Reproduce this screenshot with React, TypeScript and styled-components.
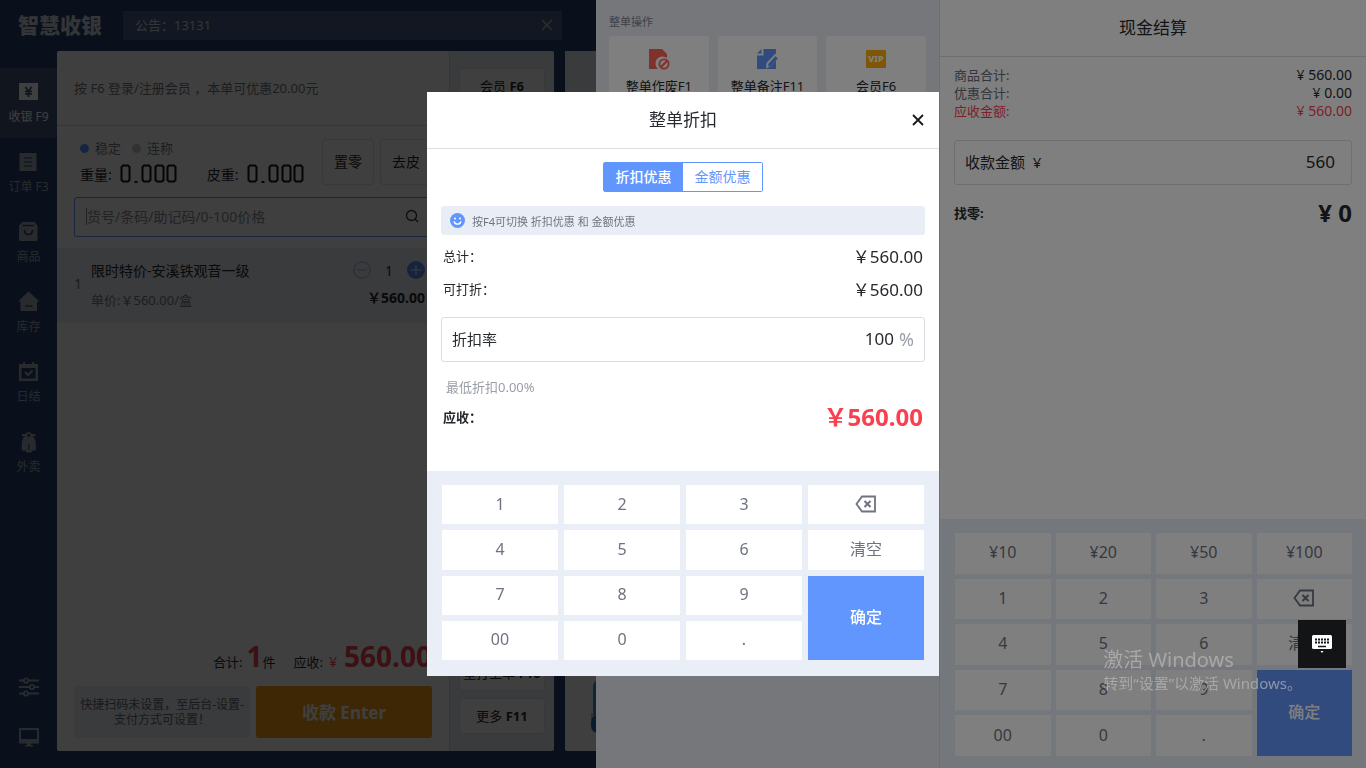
import React from 'react';
import styled, { createGlobalStyle } from 'styled-components';

const GlobalStyle = createGlobalStyle`
  * { box-sizing: border-box; }
  html, body, #root { height: 100%; }
  body { margin: 0; overflow: hidden; font-family: 'Noto Sans', 'Noto Sans CJK SC', sans-serif; font-size: 13px; color: #26292e; }
  button, input { font: inherit; color: inherit; margin: 0; padding: 0; }
  button { cursor: pointer; border: 0; background: none; }
  a { color: inherit; text-decoration: none; }
  p, h1, h2, dl, dd, dt { margin: 0; font-weight: 400; }
  b, strong { font-weight: 700; }
`;

/* ---------- point-of-sale page ---------- */

const Page = styled.div`
  height: 100%;
  min-height: 100vh;
  display: flex;
  flex-direction: column;
  background: #26406c;
`;
const TopBar = styled.header`
  height: 51px;
  flex: none;
  display: flex;
  align-items: center;
  padding-left: 18px;
`;
const Brand = styled.h1`
  width: 105px;
  padding-bottom: 2px;
  font-size: 21px;
  line-height: 24px;
  font-weight: 900;
  color: #cfd4de;
  white-space: nowrap;
`;
const Notice = styled.div`
  width: 439px;
  height: 29px;
  display: flex;
  align-items: center;
  justify-content: space-between;
  padding: 0 9px 2px 12px;
  background: #4f5d84;
  color: #d0d4dc;
  font-size: 13px;
`;
const NoticeClose = styled.button`
  display: flex;
  color: #b0b4be;
`;
const Main = styled.div`
  flex: 1;
  display: flex;
  min-height: 0;
`;
const Sidebar = styled.nav`
  width: 57px;
  flex: none;
  display: flex;
  flex-direction: column;
  justify-content: space-between;
  padding: 17px 0 6px;
`;
const NavGroup = styled.div`
  display: flex;
  flex-direction: column;
`;
const NavItem = styled.a<{ $active?: boolean }>`
  height: 70px;
  display: flex;
  flex-direction: column;
  align-items: center;
  justify-content: center;
  gap: 6px;
  padding-top: 2px;
  font-size: 12px;
  line-height: 18px;
  color: ${p => (p.$active ? '#ffffff' : '#a2a8b6')};
  background: ${p => (p.$active ? '#465478' : 'transparent')};
`;
const ToolLink = styled(NavItem)`
  height: 50px;
  padding-top: 0;
`;
const Order = styled.section`
  width: 393px;
  flex: none;
  display: flex;
  flex-direction: column;
  background: #fff;
  border-radius: 2px 0 0 2px;
  border-right: 1px solid #d4d8df;
`;
const Content = styled.div`
  flex: 1;
  display: flex;
  padding-bottom: 17px;
  min-width: 0;
`;
const MemberHint = styled.p`
  height: 75px;
  flex: none;
  padding: 0 17px;
  line-height: 74px;
  color: #73767e;
  border-bottom: 1px solid #d9dbe0;
  white-space: nowrap;
`;
const ScaleRow = styled.div`
  height: 71px;
  flex: none;
  display: flex;
  gap: 6px;
  padding: 13px 17px 0 23px;
`;
const Readings = styled.div`
  flex: none;
  width: 236px;
`;
const ScaleStates = styled.div`
  display: flex;
  gap: 11px;
  height: 18px;
  line-height: 18px;
  color: #777b84;
`;
const ScaleState = styled.span<{ $on?: boolean }>`
  display: flex;
  align-items: center;
  gap: 6px;
  &::before {
    content: '';
    width: 9px;
    height: 9px;
    border-radius: 50%;
    background: ${p => (p.$on ? '#6296ff' : '#c4c8c8')};
  }
`;
const Weights = styled.div`
  display: flex;
  gap: 29px;
  margin-top: 4px;
  height: 26px;
  font-size: 14px;
`;
const Weight = styled.div`
  display: flex;
  align-items: center;
  gap: 8px;
  white-space: nowrap;
`;
const Digits = styled.output`
  display: flex;
`;
const ScaleButton = styled.button`
  width: 52px;
  height: 46px;
  flex: none;
  padding-bottom: 2px;
  border: 1px solid #dfe1e4;
  border-radius: 3px;
  font-size: 14px;
`;
const SearchBox = styled.label`
  height: 40px;
  flex: none;
  margin: 0 17px 11px;
  display: flex;
  align-items: center;
  border: 1px solid #6296ff;
  border-radius: 3px;
  padding: 0 12px 2px 11px;
  input {
    flex: 1;
    min-width: 0;
    border: 0;
    border-left: 1px solid #8a8f96;
    outline: 0;
    height: 17px;
    background: none;
    font-size: 14px;
  }
  input::placeholder { color: #898d93; opacity: 1; }
`;
const Line = styled.article`
  height: 75px;
  flex: none;
  display: flex;
  align-items: center;
  gap: 9px;
  padding: 0 24px 0 17px;
  background: #e8ecf5;
`;
const LineNo = styled.span`
  width: 8px;
  padding-bottom: 4px;
  font-size: 14px;
  color: #6e7178;
`;
const LineBody = styled.div`
  flex: 1;
  height: 58px;
`;
const LineRow = styled.div`
  display: flex;
  align-items: center;
  justify-content: space-between;
  height: 27px;
  font-size: 14px;
  white-space: nowrap;
`;
const Muted = styled.span`
  font-size: 13px;
  color: #777b84;
  padding-top: 4px;
`;
const Stepper = styled.div`
  display: flex;
  align-items: center;
  gap: 14px;
  button { display: flex; }
`;
const Spacer = styled.div`
  flex: 1;
`;
const Totals = styled.div`
  display: flex;
  align-items: baseline;
  justify-content: flex-end;
  padding-right: 17px;
  height: 52px;
  line-height: 44px;
  white-space: nowrap;
  font-size: 13px;
  b { font-size: 28px; color: #f5404f; margin-left: 4px; }
  em { font-style: normal; font-size: 14px; color: #f5404f; margin: 0 3px 0 6px; }
  span { margin-left: 18px; }
`;
const PayRow = styled.div`
  display: flex;
  gap: 6px;
  padding: 0 17px 13px;
`;
const ScanHint = styled.div`
  width: 176px;
  height: 52px;
  border-radius: 3px;
  background: #e8ecf3;
  color: #666a73;
  font-size: 12px;
  line-height: 15px;
  text-align: center;
  padding: 11px 3px;
`;
const PayButton = styled.button`
  width: 176px;
  height: 52px;
  padding-bottom: 2px;
  border-radius: 3px;
  background: #f79d10;
  color: #fff;
  font-size: 17px;
  font-weight: 700;
`;
const Shortcuts = styled.aside`
  width: 104px;
  flex: none;
  display: flex;
  flex-direction: column;
  gap: 7px;
  padding: 17px 9px;
  background: #e8ecf3;
  border-radius: 0 2px 2px 0;
`;
const ShortcutButton = styled.button`
  flex: none;
  height: 36px;
  padding-bottom: 2px;
  background: #fff;
  border: 1px solid #dfe2e8;
  border-radius: 3px;
  font-size: 13px;
  white-space: nowrap;
`;
const Catalog = styled.section`
  flex: 1;
  margin-left: 11px;
  display: flex;
  flex-direction: column;
  justify-content: flex-end;
  background: #fff;
  border-radius: 2px;
  padding: 0 24px 16px 26px;
  svg { flex: none; }
`;
const CatalogHead = styled.div`
  height: 75px;
  margin: 0 -24px auto -26px;
  background: #e8ecf3;
`;

/* ---------- layered panels ---------- */

const Mask = styled.div<{ $center?: boolean }>`
  position: fixed;
  inset: 0;
  display: flex;
  justify-content: ${p => (p.$center ? 'center' : 'flex-end')};
  align-items: ${p => (p.$center ? 'center' : 'stretch')};
  background: rgba(0, 0, 0, 0.5);
`;
const Operations = styled.section`
  width: 343px;
  background: #eaeef7;
  padding: 13px 13px 0;
`;
const OpsTitle = styled.h2`
  font-size: 11px;
  line-height: 17px;
  color: #80848e;
  margin-bottom: 6px;
`;
const OpsGrid = styled.div`
  display: grid;
  grid-template-columns: repeat(3, 1fr);
  gap: 9px;
`;
const OpsButton = styled.button`
  height: 72px;
  display: flex;
  flex-direction: column;
  align-items: center;
  gap: 7px;
  padding-top: 12px;
  background: #fff;
  border-radius: 3px;
  font-size: 13px;
  line-height: 18px;
  white-space: nowrap;
`;
const Cash = styled.section`
  width: 427px;
  display: flex;
  flex-direction: column;
  background: #fff;
  border-left: 1px solid #dcdfe3;
`;
const PanelHead = styled.header`
  position: relative;
  height: 57px;
  flex: none;
  display: flex;
  align-items: center;
  justify-content: center;
  border-bottom: 1px solid #dadfe0;
  h2 { font-size: 17px; line-height: 24px; }
`;
const CloseButton = styled.button`
  position: absolute;
  right: 15px;
  top: 22px;
  display: flex;
  color: #17191c;
`;
const CashBody = styled.div`
  flex: 1;
  padding: 9px 14px 0;
`;
const SumRow = styled.div<{ $tone?: string }>`
  display: flex;
  justify-content: space-between;
  line-height: 18px;
  font-size: 14px;
  color: ${p => p.$tone || '#26292e'};
  dt { font-size: 13px; color: ${p => p.$tone || '#666a78'}; }
`;
const Field = styled.label`
  height: 45px;
  display: flex;
  align-items: center;
  gap: 5px;
  border: 1px solid #dadee2;
  border-radius: 3px;
  padding: 0 10px 2px;
  font-size: 15px;
  white-space: nowrap;
  input {
    flex: 1;
    min-width: 0;
    border: 0;
    outline: 0;
    background: none;
    text-align: right;
    font-size: 17px;
  }
`;
const CashField = styled(Field)`
  margin-top: 20px;
  padding-right: 16px;
`;
const Unit = styled.span`
  font-size: 18px;
  color: #9a9ea9;
`;
const StrongRow = styled.div<{ $red?: boolean }>`
  display: flex;
  align-items: center;
  justify-content: space-between;
  font-size: 13px;
  font-weight: 700;
  line-height: 34px;
  strong { font-size: 24px; color: ${p => (p.$red ? '#fa3f50' : '#26292e')}; }
`;
const ChangeRow = styled(StrongRow)`
  margin-top: 11px;
`;
const Keypad = styled.div<{ $height: number; $gap: number; $pad: string }>`
  flex: none;
  height: ${p => p.$height}px;
  display: grid;
  grid-template-columns: repeat(4, 1fr);
  grid-auto-rows: 1fr;
  gap: ${p => p.$gap}px;
  padding: ${p => p.$pad};
  background: #e9eef7;
`;
const Key = styled.button<{ $tall?: boolean }>`
  grid-row: ${p => (p.$tall ? 'span 2' : 'auto')};
  min-height: 0;
  display: flex;
  align-items: center;
  justify-content: center;
  padding-bottom: 2px;
  font-size: 16px;
  line-height: 22px;
  font-weight: ${p => (p.$tall ? 500 : 400)};
  background: ${p => (p.$tall ? '#6296ff' : '#fff')};
  color: ${p => (p.$tall ? '#fff' : '#6e7380')};
`;

/* ---------- discount dialog ---------- */

const Dialog = styled.section`
  width: 512px;
  display: flex;
  flex-direction: column;
  background: #fff;
`;
const DialogBody = styled.div`
  padding: 13px 14px 37px;
`;
const Tabs = styled.div`
  display: flex;
  width: 160px;
  margin: 0 auto 14px;
  border: 1px solid #6296ff;
  border-radius: 2px;
`;
const Tab = styled.button<{ $active?: boolean }>`
  flex: 1;
  height: 28px;
  padding-bottom: 3px;
  font-size: 14px;
  font-weight: ${p => (p.$active ? 500 : 400)};
  color: ${p => (p.$active ? '#fff' : '#6296ff')};
  background: ${p => (p.$active ? '#6296ff' : '#fff')};
`;
const Tip = styled.p`
  height: 29px;
  display: flex;
  align-items: center;
  gap: 7px;
  padding: 0 10px 0 9px;
  border-radius: 3px;
  background: #e9eef6;
  font-size: 11px;
  color: #70747f;
`;
const AmountRow = styled.div`
  display: flex;
  align-items: center;
  justify-content: space-between;
  height: 33px;
  padding: 0 2px 2px;
  font-size: 17px;
  dt { font-size: 13px; }
`;
const AmountList = styled.dl`
  padding: 5px 0 11px;
`;
const LimitNote = styled.p`
  margin: 15px 5px 3px;
  line-height: 20px;
  font-size: 13px;
  color: #9a9ea8;
`;
const DueRow = styled(StrongRow)`
  padding: 0 2px;
`;

/* ---------- floating extras ---------- */

const ImeButton = styled.button`
  position: fixed;
  right: 20px;
  bottom: 100px;
  width: 48px;
  height: 48px;
  display: flex;
  align-items: center;
  justify-content: center;
  background: #131416;
`;
const Watermark = styled.div`
  position: fixed;
  right: 64px;
  bottom: 74px;
  pointer-events: none;
  white-space: nowrap;
  color: rgba(190, 190, 190, 0.65);
  font-size: 15px;
  line-height: 22px;
  strong { display: block; font-weight: 400; font-size: 20px; line-height: 25px; }
`;

/* ---------- icons ---------- */

const Cross = ({ size, width }: { size: number; width: number }) => (
  <svg width={size} height={size} viewBox="0 0 12 12" fill="none" stroke="currentColor" strokeWidth={width} aria-hidden="true">
    <path d="M1 1l10 10M11 1L1 11" />
  </svg>
);

const NAV_ICONS: Record<string, React.ReactNode> = {
  cash: (
    <>
      <path fill="currentColor" d="M0 1h19v17H0z" />
      <path d="M6.500 5l3 4.500 3-4.500M6 9.500h7M6 12h7M9.500 9.500V15" stroke="#3b4970" strokeWidth="1.600" fill="none" />
    </>
  ),
  order: (
    <>
      <path fill="currentColor" d="M.5 1h17v18H.5z" />
      <path d="M5 6h8M5 10h8M5 14h8" stroke="#26406c" strokeWidth="1.200" />
    </>
  ),
  goods: (
    <>
      <path fill="currentColor" d="M3 0h12.500l3 4v13.500a1.500 1.500 0 01-1.500 1.500H1.500A1.500 1.500 0 010 17.500V4z" />
      <path d="M3.500 3.500h11.500" stroke="#26406c" strokeWidth="1.300" />
      <path d="M5.500 8c0 6 8 6 8 0" stroke="#26406c" strokeWidth="1.600" fill="none" />
    </>
  ),
  stock: (
    <>
      <path fill="currentColor" d="M9.500-.5L20.500 9.500H18V19H1.500V9.500H-1z" />
      <path d="M6 14h7.500" stroke="#26406c" strokeWidth="1.200" />
    </>
  ),
  daily: (
    <>
      <path fill="currentColor" d="M0 2h4V0h2v2h7V0h2v2h4v17H0z" />
      <path fill="#26406c" d="M2.500 6h14v10.500h-14z" />
      <path d="M6 10l3 3 4.500-4.500" stroke="currentColor" strokeWidth="2.400" fill="none" />
    </>
  ),
  takeout: (
    <>
      <path fill="currentColor" d="M3 2h3.800a3.200 3.200 0 015.900 0H16.500v2.200h-3.200C16 6 16.800 9 16.800 12v6.500h-3.500l-1 2h-5l-1-2H2.700V12c0-3 .8-6 3.500-7.800H3z" />
      <circle cx="9.800" cy="3.300" r="1.500" fill="#26406c" />
      <path d="M9.800 12.500V18" stroke="#26406c" strokeWidth="1.200" />
    </>
  ),
  settings: (
    <>
      <path d="M0 3.500h20M0 10h20M0 16.500h20" stroke="currentColor" strokeWidth="2" />
      <g fill="#26406c" stroke="currentColor" strokeWidth="1.800">
        <circle cx="7" cy="3.500" r="2.200" />
        <circle cx="13" cy="10" r="2.200" />
        <circle cx="7" cy="16.500" r="2.200" />
      </g>
    </>
  ),
  screen: (
    <path fill="currentColor" fillRule="evenodd" d="M0 1h20v15.500h-8V18h2v1.500H6V18h2v-1.500H0zM2 3v9h16V3z" />
  ),
};

const NavIcon = ({ name }: { name: string }) => (
  <svg width="20" height="20" viewBox="0 0 20 20" overflow="visible" aria-hidden="true">{NAV_ICONS[name]}</svg>
);

const ZERO = 'M3 2.500h5l1.500 1.500v13l-1.500 1.500H3l-1.500-1.500V4z';

/* Segment style read-out, each zero drawn as a bevelled frame. */
const ScaleReading = ({ value }: { value: string }) => (
  <Digits aria-label={value}>
    <svg width="58" height="22" viewBox="0 0 58 22" fill="none" stroke="#15171a" strokeWidth="2" aria-hidden="true">
      <path d={ZERO} />
      <path d={ZERO} transform="translate(21 0)" />
      <path d={ZERO} transform="translate(34 0)" />
      <path d={ZERO} transform="translate(46 0)" />
      <path d="M14.500 19h3" />
    </svg>
  </Digits>
);

const Backspace = () => (
  <svg width="22" height="18" viewBox="0 0 22 18" fill="none" stroke="currentColor" strokeWidth="1.800" role="img" aria-label="退格">
    <path d="M7 1.500h13v15H7L1.500 9z" />
    <path d="M9.500 6l6 6M15.500 6l-6 6" strokeWidth="2" />
  </svg>
);

/* ---------- data ---------- */

const NAV = [
  ['cash', '收银 F9'],
  ['order', '订单 F3'],
  ['goods', '商品'],
  ['stock', '库存'],
  ['daily', '日结'],
  ['takeout', '外卖'],
];
const DIALOG_KEYS = ['1', '2', '3', 'back', '4', '5', '6', '清空', '7', '8', '9', '确定', '00', '0', '.'];
const CASH_KEYS = ['¥10', '¥20', '¥50', '¥100', ...DIALOG_KEYS];

const Keys = ({ keys }: { keys: string[] }) => (
  <>
    {keys.map(k => (
      <Key key={k} type="button" $tall={k === '确定'}>
        {k === 'back' ? <Backspace /> : k}
      </Key>
    ))}
  </>
);

export default function App() {
  return (
    <>
      <GlobalStyle />
      <Page>
        <TopBar>
          <Brand>智慧收银</Brand>
          <Notice>
            <span>公告：13131</span>
            <NoticeClose type="button" aria-label="关闭公告"><Cross size={12} width={1.6} /></NoticeClose>
          </Notice>
        </TopBar>
        <Main>
          <Sidebar>
            <NavGroup>
              {NAV.map(([icon, label], i) => (
                <NavItem key={icon} href="#" $active={i === 0}>
                  <NavIcon name={icon} />
                  {label}
                </NavItem>
              ))}
            </NavGroup>
            <NavGroup>
              <ToolLink href="#" aria-label="设置"><NavIcon name="settings" /></ToolLink>
              <ToolLink href="#" aria-label="副屏"><NavIcon name="screen" /></ToolLink>
            </NavGroup>
          </Sidebar>
          <Content>
            <Order>
              <MemberHint>按 F6 登录/注册会员 ，本单可优惠20.00元</MemberHint>
              <ScaleRow>
                <Readings>
                  <ScaleStates>
                    <ScaleState $on>稳定</ScaleState>
                    <ScaleState>连称</ScaleState>
                  </ScaleStates>
                  <Weights>
                    <Weight>重量: <ScaleReading value="0.000" /></Weight>
                    <Weight>皮重: <ScaleReading value="0.000" /></Weight>
                  </Weights>
                </Readings>
                <ScaleButton type="button">置零</ScaleButton>
                <ScaleButton type="button">去皮</ScaleButton>
              </ScaleRow>
              <SearchBox>
                <input aria-label="搜索商品" placeholder="货号/条码/助记码/0-100价格" />
                <svg width="14" height="14" viewBox="0 0 14 14" fill="none" stroke="#303338" strokeWidth="1.300" aria-hidden="true">
                  <circle cx="6.500" cy="6.500" r="5" />
                  <path d="M10 10l3 3" />
                </svg>
              </SearchBox>
              <Line>
                <LineNo>1</LineNo>
                <LineBody>
                  <LineRow>
                    <span>限时特价-安溪铁观音一级</span>
                    <Stepper>
                      <button type="button" aria-label="减少">
                        <svg width="18" height="18" viewBox="0 0 18 18" fill="none" stroke="#8fb0ef"><circle cx="9" cy="9" r="8.200" /><path d="M4.500 9h9" /></svg>
                      </button>
                      1
                      <button type="button" aria-label="增加">
                        <svg width="18" height="18" viewBox="0 0 18 18" stroke="#e8ecf5"><circle cx="9" cy="9" r="9" fill="#5c8ff5" stroke="none" /><path d="M4 9h10M9 4v10" /></svg>
                      </button>
                    </Stepper>
                  </LineRow>
                  <LineRow>
                    <Muted>单价:￥560.00/盒</Muted>
                    <b>￥560.00</b>
                  </LineRow>
                </LineBody>
              </Line>
              <Spacer />
              <Totals>
                合计:<b>1</b>件<span>应收:</span><em>¥</em><b>560.00</b>
              </Totals>
              <PayRow>
                <ScanHint>快捷扫码未设置，至后台-设置-支付方式可设置！</ScanHint>
                <PayButton type="button">收款 Enter</PayButton>
              </PayRow>
            </Order>
            <Shortcuts>
              <ShortcutButton type="button">会员 <b>F6</b></ShortcutButton>
              <Spacer />
              <ShortcutButton type="button">重打上单 <b>F10</b></ShortcutButton>
              <ShortcutButton type="button">更多 <b>F11</b></ShortcutButton>
            </Shortcuts>
            <Catalog>
              <CatalogHead />
              <svg width="60" height="56" viewBox="0 0 60 56" aria-hidden="true">
                <rect x="2" width="58" height="50" rx="8" fill="#2f9fe8" />
                <path d="M0 34l6 4v8H0z" fill="#f0b060" />
                <rect y="36" width="50" height="18" rx="7" fill="#2a6fc4" />
              </svg>
            </Catalog>
          </Content>
        </Main>
      </Page>

      <Mask>
        <Operations>
          <OpsTitle>整单操作</OpsTitle>
          <OpsGrid>
            <OpsButton type="button">
              <svg width="22" height="22" viewBox="0 0 22 22" aria-hidden="true">
                <path d="M1 1h13l5 5v4a6.800 6.800 0 00-9 11H1z" fill="#ff6259" />
                <g fill="none" stroke="#ff6259" strokeWidth="1.900"><circle cx="16" cy="16" r="4.600" /><path d="M13 19l6-6" /></g>
              </svg>
              整单作废F1
            </OpsButton>
            <OpsButton type="button">
              <svg width="22" height="22" viewBox="0 0 22 22" aria-hidden="true">
                <path d="M7.500 1H20v20H1V7.500h6.500z" fill="#6296ff" />
                <path d="M1 5.500L5.500 1v4.500z" fill="#6296ff" />
                <path d="M10 20.500l.5-5.500 9-9.500 4 3.500-9 9.500z" fill="#fff" />
                <path d="M12 18.500l.5-2.800 7-7.500 2.300 2.200-7 7.500z" fill="#6296ff" />
              </svg>
              整单备注F11
            </OpsButton>
            <OpsButton type="button">
              <svg width="22" height="22" viewBox="0 0 22 22" aria-hidden="true">
                <rect x="1" y="2" width="20" height="18" rx="1" fill="#ffab0c" />
                <text x="11" y="14" textAnchor="middle" fontSize="9" fontWeight="800" fill="#fff">VIP</text>
              </svg>
              会员F6
            </OpsButton>
          </OpsGrid>
        </Operations>
        <Cash>
          <PanelHead><h2>现金结算</h2></PanelHead>
          <CashBody>
            <dl>
              <SumRow><dt>商品合计:</dt><dd>¥ 560.00</dd></SumRow>
              <SumRow><dt>优惠合计:</dt><dd>¥ 0.00</dd></SumRow>
              <SumRow $tone="#fa3f50"><dt>应收金额:</dt><dd>¥ 560.00</dd></SumRow>
            </dl>
            <CashField>
              收款金额&nbsp; ¥
              <input defaultValue="560" />
            </CashField>
            <ChangeRow>找零:<strong>¥ 0</strong></ChangeRow>
          </CashBody>
          <Keypad $height={249} $gap={5} $pad="14px 14px 12px 15px"><Keys keys={CASH_KEYS} /></Keypad>
        </Cash>
      </Mask>

      <Mask $center>
        <Dialog role="dialog" aria-label="整单折扣">
          <PanelHead>
            <h2>整单折扣</h2>
            <CloseButton type="button" aria-label="关闭"><Cross size={12} width={1.8} /></CloseButton>
          </PanelHead>
          <DialogBody>
            <Tabs>
              <Tab type="button" $active>折扣优惠</Tab>
              <Tab type="button">金额优惠</Tab>
            </Tabs>
            <Tip>
              <svg width="15" height="15" viewBox="0 0 15 15" aria-hidden="true">
                <circle cx="7.500" cy="7.500" r="7.500" fill="#6296ff" />
                <circle cx="5" cy="5.500" r="1" fill="#fff" />
                <circle cx="10" cy="5.500" r="1" fill="#fff" />
                <path d="M4 8.500c1 3.500 6 3.500 7 0" fill="none" stroke="#fff" strokeWidth="1.400" />
              </svg>
              按F4可切换 折扣优惠 和 金额优惠
            </Tip>
            <AmountList>
              <AmountRow><dt>总计：</dt><dd>￥560.00</dd></AmountRow>
              <AmountRow><dt>可打折：</dt><dd>￥560.00</dd></AmountRow>
            </AmountList>
            <Field>
              折扣率
              <input defaultValue="100" />
              <Unit>%</Unit>
            </Field>
            <LimitNote>最低折扣0.00%</LimitNote>
            <DueRow $red>应收：<strong>￥560.00</strong></DueRow>
          </DialogBody>
          <Keypad $height={205} $gap={6} $pad="14px 15px 16px"><Keys keys={DIALOG_KEYS} /></Keypad>
        </Dialog>
      </Mask>

      <ImeButton type="button" aria-label="屏幕键盘">
        <svg width="20" height="18" viewBox="0 0 20 18" aria-hidden="true">
          <rect width="20" height="14" rx="1.500" fill="#fff" />
          <path d="M3 4.500h14M3 7.500h14" stroke="#131416" strokeWidth="2" strokeDasharray="2 1" />
          <path d="M6 11.500h8" stroke="#131416" strokeWidth="1.500" />
          <path d="M8.500 16h3l-1.500 2z" fill="#fff" />
        </svg>
      </ImeButton>
      <Watermark><strong>激活 Windows</strong>转到“设置”以激活 Windows。</Watermark>
    </>
  );
}
